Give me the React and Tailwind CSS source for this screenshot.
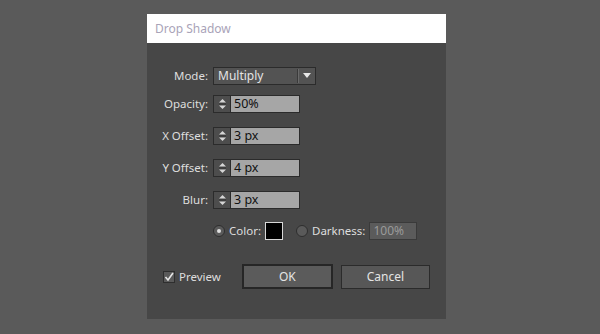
import React from "react";

const font = { fontFamily: '"Noto Sans", "Open Sans", sans-serif' };

function Stepper() {
  return (
    <div className="flex h-full w-[17px] flex-col items-center justify-center border-r border-[#2b2b2b] bg-[#4d4d4d]">
      <svg width="9" height="14" viewBox="0 0 9 14">
        <path d="M1 5.5 L4.5 2 L8 5.5 Z" fill="#d6d6d6" />
        <rect x="1" y="6.5" width="7" height="1" fill="#2e2e2e" />
        <path d="M1 8.5 L4.5 12 L8 8.5 Z" fill="#d6d6d6" />
      </svg>
    </div>
  );
}

function NumField({ value }) {
  return (
    <div className="flex h-[18px] w-[87px] border border-[#2b2b2b]">
      <Stepper />
      <div className="flex flex-1 items-center bg-[#a6a6a6] pl-[3px] text-[12.5px] leading-none text-[#111]">
        {value}
      </div>
    </div>
  );
}

function Row({ label, children, className = "" }) {
  return (
    <div className={`flex items-center ${className}`}>
      <div className="w-[66px] pr-[5px] text-right text-[11.5px] text-[#dedede]">{label}</div>
      {children}
    </div>
  );
}

export default function App() {
  return (
    <div className="h-[334px] w-[600px] overflow-hidden bg-[#5a5a5a]" style={font}>
      <div className="ml-[147px] mt-[14px] w-[299px]">
        <div className="flex h-[29px] items-center bg-white pl-[8px] text-[12px] text-[#a9a3b8]">
          Drop Shadow
        </div>
        <div className="h-[276px] bg-[#474747] pt-[24px]">
          <Row label="Mode:">
            <div className="flex h-[18px] w-[103px] items-center border border-[#2b2b2b] bg-[#535353]">
              <div className="flex-1 pl-[4px] text-[12px] text-[#e4e4e4]">Multiply</div>
              <div className="h-[14px] w-[1px] bg-[#3a3a3a]" />
              <div className="h-[14px] w-[1px] bg-[#6a6a6a]" />
              <div className="flex w-[16px] items-center justify-center">
                <svg width="8" height="6" viewBox="0 0 8 6">
                  <path d="M0 0 L8 0 L4 5 Z" fill="#e8e8e8" />
                </svg>
              </div>
            </div>
          </Row>
          <Row label="Opacity:" className="mt-[10px]">
            <NumField value="50%" />
          </Row>
          <Row label="X Offset:" className="mt-[14px]">
            <NumField value="3 px" />
          </Row>
          <Row label="Y Offset:" className="mt-[14px]">
            <NumField value="4 px" />
          </Row>
          <Row label="Blur:" className="mt-[14px]">
            <NumField value="3 px" />
          </Row>
          <div className="mt-[13px] flex h-[18px] items-center pl-[66px]">
            <div className="flex h-[12px] w-[12px] items-center justify-center rounded-full border border-[#2e2e2e] bg-[#5a5a5a]">
              <div className="h-[4px] w-[4px] rounded-full bg-[#e0e0e0]" />
            </div>
            <span className="ml-[4px] text-[11.5px] text-[#dedede]">Color:</span>
            <div className="ml-[4px] h-[18px] w-[18px] border border-[#d8d8d8] bg-black" />
            <div className="ml-[13px] h-[12px] w-[12px] rounded-full border border-[#2e2e2e] bg-[#5a5a5a]" />
            <span className="ml-[4px] text-[11.5px] text-[#dedede]">Darkness:</span>
            <div className="ml-[4px] flex h-[18px] w-[48px] items-center border border-[#3a3a3a] bg-[#5b5b5b] pl-[3px] text-[12px] text-[#9a9a9a]">
              100%
            </div>
          </div>
          <div className="mt-[24px] flex items-center pl-[16px]">
            <div className="flex h-[12px] w-[12px] items-center justify-center border border-[#2e2e2e] bg-[#5a5a5a]">
              <svg width="10" height="10" viewBox="0 0 10 10">
                <path d="M1.5 5 L4 8 L9 1" stroke="#e6e6e6" strokeWidth="1.6" fill="none" />
              </svg>
            </div>
            <span className="ml-[4px] text-[11.5px] text-[#dedede]">Preview</span>
            <div className="ml-[21px] flex h-[25px] w-[91px] items-center justify-center border-2 border-[#262626] bg-[#5b5b5b] text-[12px] text-[#e4e4e4]">
              OK
            </div>
            <div className="ml-[8px] flex h-[24px] w-[89px] items-center justify-center border border-[#2b2b2b] bg-[#575757] text-[12px] text-[#e4e4e4]">
              Cancel
            </div>
          </div>
        </div>
      </div>
    </div>
  );
}
